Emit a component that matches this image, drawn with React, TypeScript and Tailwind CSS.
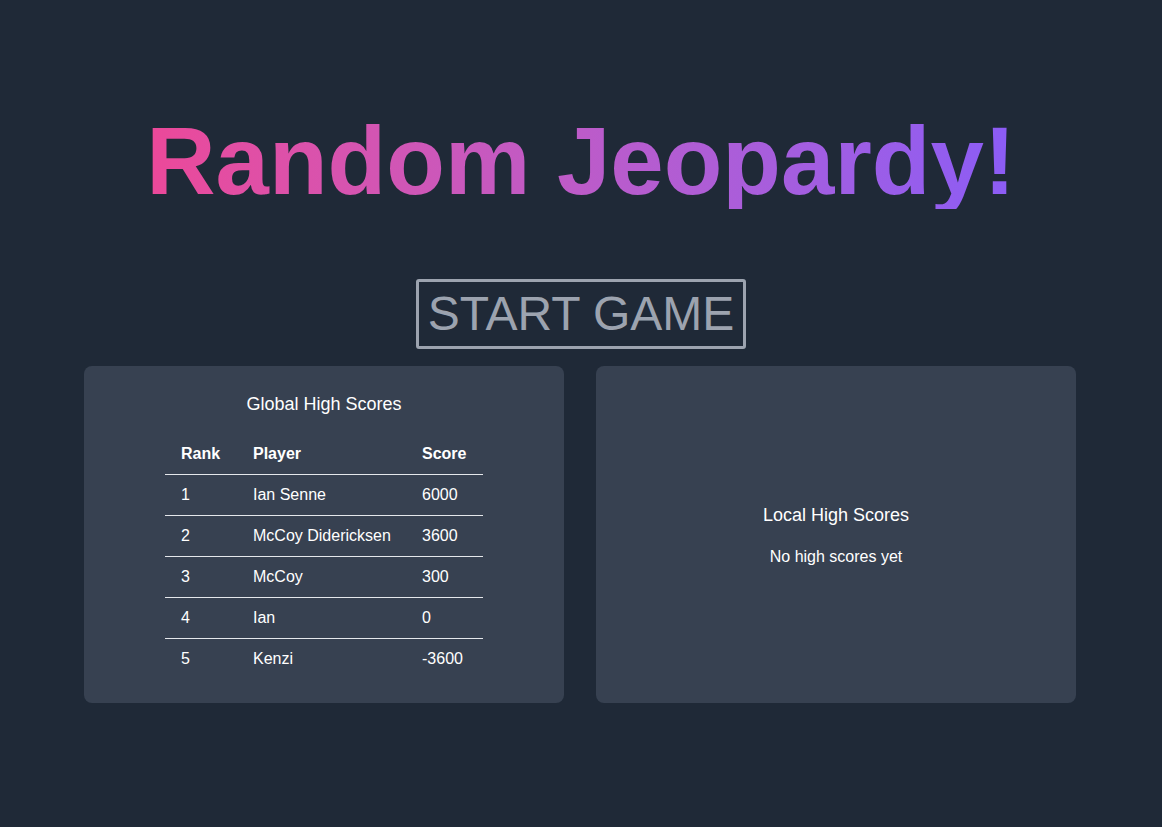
const globalScores = [
  { rank: 1, player: "Ian Senne", score: 6000 },
  { rank: 2, player: "McCoy Didericksen", score: 3600 },
  { rank: 3, player: "McCoy", score: 300 },
  { rank: 4, player: "Ian", score: 0 },
  { rank: 5, player: "Kenzi", score: -3600 },
];

export default function App() {
  return (
    <div className="min-h-screen bg-[#1f2937] font-['Liberation_Sans',Arial,sans-serif] text-white">
      <div className="flex flex-col items-center pt-[113px]">
        <h1 className="bg-gradient-to-r from-[#ec4899] to-[#8b5cf6] bg-clip-text text-8xl leading-none font-bold text-transparent">
          Random Jeopardy!
        </h1>

        <button className="mt-[70px] rounded-[3px] border-[3px] border-[#9ca3af] px-[9px] py-2 text-5xl leading-none text-[#9ca3af]">
          START GAME
        </button>

        <div className="mt-[17px] grid w-[992px] -translate-x-px grid-cols-2 gap-8">
          <section className="rounded-lg bg-[#374151] p-6">
            <h2 className="mb-4 text-center text-lg">Global High Scores</h2>
            <table className="mx-auto w-[318px] table-fixed text-left text-base">
              <thead>
                <tr className="border-b border-gray-200">
                  <th className="w-[72px] px-4 py-2 font-bold">Rank</th>
                  <th className="w-[169px] px-4 py-2 font-bold">Player</th>
                  <th className="w-[77px] px-4 py-2 font-bold">Score</th>
                </tr>
              </thead>
              <tbody className="divide-y divide-gray-200">
                {globalScores.map((row) => (
                  <tr key={row.rank}>
                    <td className="px-4 py-2">{row.rank}</td>
                    <td className="px-4 py-2 whitespace-nowrap">{row.player}</td>
                    <td className="px-4 py-2">{row.score}</td>
                  </tr>
                ))}
              </tbody>
            </table>
          </section>

          <section className="flex flex-col items-center justify-center rounded-lg bg-[#374151] p-6">
            <h2 className="mb-4 text-lg">Local High Scores</h2>
            <p className="text-base">No high scores yet</p>
          </section>
        </div>
      </div>
    </div>
  );
}
